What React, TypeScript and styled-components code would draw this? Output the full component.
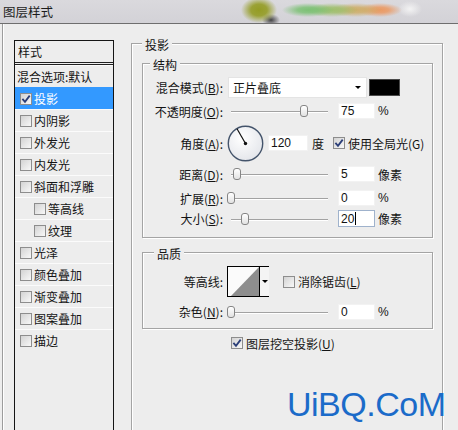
import React from "react";
import styled, { createGlobalStyle } from "styled-components";

const GlobalStyle = createGlobalStyle`
  html, body { margin: 0; padding: 0; background: #ededed; }
  body {
    font-family: "Noto Sans CJK SC", "Noto Sans", sans-serif;
    font-size: 12px;
    color: #141414;
  }
  * { box-sizing: border-box; }
`;

const Window = styled.div`
  position: relative;
  width: 458px;
  height: 430px;
  overflow: hidden;
  background: #ededed;
  display: flex;
  flex-direction: column;
`;

const TitleBar = styled.div`
  height: 24px;
  flex: none;
  border-bottom: 1px solid #6e6e6e;
  padding-left: 3px;
  font-size: 12.5px;
  line-height: 23px;
  color: #1c1c1c;
  background:
    radial-gradient(ellipse 18px 13px at 259px 10px, rgba(148, 156, 36, 1) 0, rgba(148, 156, 36, 0.9) 45%, rgba(148, 156, 36, 0) 100%),
    radial-gradient(ellipse 9px 6px at 271px 20px, rgba(30, 30, 30, 0.8), rgba(30, 30, 30, 0) 100%),
    radial-gradient(ellipse 26px 7px at 308px 10px, rgba(120, 192, 112, 0.95) 0, rgba(120, 192, 112, 0.8) 40%, rgba(120, 192, 112, 0) 100%),
    radial-gradient(ellipse 26px 7px at 332px 10px, rgba(156, 190, 104, 0.95) 0, rgba(156, 190, 104, 0.8) 40%, rgba(156, 190, 104, 0) 100%),
    radial-gradient(ellipse 26px 7px at 356px 10px, rgba(206, 172, 100, 0.95) 0, rgba(206, 172, 100, 0.8) 40%, rgba(206, 172, 100, 0) 100%),
    radial-gradient(ellipse 22px 7px at 380px 10px, rgba(236, 150, 92, 0.95) 0, rgba(236, 150, 92, 0.8) 40%, rgba(236, 150, 92, 0) 100%),
    radial-gradient(ellipse 12px 8px at 410px 9px, rgba(246, 246, 246, 0.9), rgba(246, 246, 246, 0) 100%),
    linear-gradient(#dad9dd, #d3d2d7);
`;

const Body = styled.div`
  flex: 1;
  min-height: 0;
  display: flex;
  padding-left: 2px;
`;

const Frame = styled.div`
  flex: 1;
  display: flex;
  align-items: flex-start;
  border-left: 1px solid #9c9c9c;
  box-shadow: inset 1px 0 0 #fff;
  padding: 10px 0 0 11px;
`;

/* ---------- left style list ---------- */

const StyleList = styled.div`
  width: 100px;
  height: 400px;
  margin-top: 6px;
  flex: none;
  border: 1px solid #151515;
  display: flex;
  flex-direction: column;
`;

const ListHeader = styled.div`
  height: 24px;
  flex: none;
  padding-left: 3px;
  line-height: 21px;
  border-bottom: 3px double #202020;
`;

const ListRow = styled.div<{ $selected?: boolean; $indent?: boolean; $plain?: boolean }>`
  height: 22px;
  flex: none;
  display: flex;
  align-items: center;
  gap: 2px;
  white-space: nowrap;
  padding-left: ${(p) => (p.$plain ? 2 : p.$indent ? 19 : 5)}px;
  border-top: 1px solid ${(p) => (p.$selected ? "#3399ff" : "#fbfbfb")};
  background: ${(p) => (p.$selected ? "#3399ff" : "transparent")};
  color: ${(p) => (p.$selected ? "#fff" : "#141414")};
`;

/* ---------- checkbox ---------- */

const Box = styled.span`
  width: 12px;
  height: 12px;
  flex: none;
  border: 1px solid #8d8d8d;
  background: linear-gradient(135deg, #d3d3d3, #f8f8f8);
  display: inline-flex;
  align-items: center;
  justify-content: center;
`;

const CheckBox: React.FC<{ checked?: boolean }> = ({ checked }) => (
  <Box>
    {checked && (
      <svg width="10" height="10" viewBox="0 0 10 10">
        <path d="M1.4 4.8 L4 7.8 L8.7 1.6" fill="none" stroke="#2b3e78" strokeWidth="1.8" />
      </svg>
    )}
  </Box>
);

const CheckLabel = styled.span<{ $ml?: number }>`
  display: inline-flex;
  align-items: center;
  gap: 3px;
  white-space: nowrap;
  margin-left: ${(p) => p.$ml ?? 0}px;
`;

const Key = styled.u`
  text-decoration-thickness: 1px;
  text-underline-offset: 1px;
`;

/* ---------- group boxes ---------- */

const Group = styled.fieldset<{ $w: number; $h?: number; $pad: string; $mt?: number }>`
  margin: ${(p) => p.$mt ?? 0}px 0 0 0;
  min-width: 0;
  width: ${(p) => p.$w}px;
  ${(p) => (p.$h ? `height: ${p.$h}px;` : "")}
  flex: none;
  border: 1px solid #a4a4a4;
  box-shadow: inset 1px 1px 0 #fff, 1px 1px 0 #fff;
  padding: ${(p) => p.$pad};
  display: flex;
  flex-direction: column;
`;

const Legend = styled.legend<{ $shift?: number }>`
  padding: 4px 3px 0;
  margin-left: ${(p) => p.$shift ?? 0}px;
  line-height: 14px;
  background: #ededed;
`;

const MainGroup = styled(Group)`
  margin-left: 17px;
`;

const FormRow = styled.div<{ $mt?: number; $h: number; $pl?: number }>`
  display: flex;
  align-items: center;
  height: ${(p) => p.$h}px;
  margin-top: ${(p) => p.$mt ?? 0}px;
  padding-left: ${(p) => p.$pl ?? 0}px;
  white-space: nowrap;
`;

const Label = styled.span`
  width: 73px;
  flex: none;
  text-align: right;
  white-space: nowrap;
`;

const Select = styled.div`
  width: 139px;
  height: 21px;
  margin-left: 5px;
  flex: none;
  background: #fff;
  border: 1px solid #e4e4e4;
  display: flex;
  align-items: center;
  justify-content: space-between;
  padding: 0 5px 0 4px;
`;

const DownArrow = styled.span<{ $size: number }>`
  width: 0;
  height: 0;
  border-left: ${(p) => p.$size}px solid transparent;
  border-right: ${(p) => p.$size}px solid transparent;
  border-top: ${(p) => p.$size}px solid #000;
`;

const Swatch = styled.div`
  width: 31px;
  height: 17px;
  margin-left: 2px;
  flex: none;
  background: #000;
  border: 1px solid #4a4a4a;
`;

const Track = styled.div`
  position: relative;
  width: 98px;
  height: 12px;
  margin-left: 7px;
  flex: none;
  &::before {
    content: "";
    position: absolute;
    left: 1px;
    right: 0;
    top: 6px;
    height: 1px;
    background: #a2a2a2;
    box-shadow: 0 1px 0 #fff;
  }
`;

const Thumb = styled.span`
  position: absolute;
  top: 0;
  width: 8px;
  height: 12px;
  border: 1px solid #858585;
  border-radius: 3px;
  background: linear-gradient(#ffffff, #e2e2e2);
`;

const Slider: React.FC<{ frac: number }> = ({ frac }) => (
  <Track>
    <Thumb style={{ left: `${Math.round(frac * 97 + 1 - 4)}px` }} />
  </Track>
);

const Field = styled.div<{ $w: number; $ml: number; $focus?: boolean }>`
  width: ${(p) => p.$w}px;
  height: ${(p) => (p.$focus ? 17 : 16)}px;
  margin-left: ${(p) => p.$ml}px;
  flex: none;
  background: #fff;
  border: 1px solid ${(p) => (p.$focus ? "#9fb2cc" : "#f2f2f2")};
  padding-left: 2px;
  display: flex;
  align-items: center;
  font-family: "Liberation Sans", Arial, sans-serif;
  font-size: 12px;
  color: #111;
`;

const Caret = styled.span`
  width: 1px;
  height: 13px;
  background: #000;
  margin-left: 1px;
`;

const Unit = styled.span<{ $ml?: number }>`
  margin-left: ${(p) => p.$ml ?? 3}px;
  flex: none;
`;

const PctUnit = styled(Unit)`
  font-family: "Liberation Sans", Arial, sans-serif;
  font-size: 12px;
`;

const DialWrap = styled.div`
  width: 37px;
  height: 37px;
  margin-left: 4px;
  flex: none;
  display: flex;
`;

const Dial: React.FC<{ angle: number }> = ({ angle }) => {
  const r = (angle * Math.PI) / 180;
  const x2 = 18.5 + Math.cos(r) * 17;
  const y2 = 18.5 - Math.sin(r) * 17;
  return (
    <DialWrap>
      <svg width="37" height="37" viewBox="0 0 37 37">
        <defs>
          <radialGradient id="dialFill" cx="40%" cy="35%" r="70%">
            <stop offset="0" stopColor="#ffffff" />
            <stop offset="1" stopColor="#e3e5ea" />
          </radialGradient>
        </defs>
        <circle cx="18.5" cy="18.5" r="17.2" fill="url(#dialFill)" stroke="#44546b" strokeWidth="1.4" />
        <line x1="18.5" y1="18.5" x2={x2} y2={y2} stroke="#111" strokeWidth="1.2" />
        <circle cx="18.5" cy="18.5" r="1.7" fill="#111" />
      </svg>
    </DialWrap>
  );
};

const ContourBox = styled.div`
  width: 42px;
  height: 31px;
  margin-left: 4px;
  flex: none;
  border: 1px solid #000;
  display: flex;
  background: #fff;
`;

const ContourPreview = styled.div`
  flex: 1;
  display: flex;
  background: #fbfbfb;
`;

const ContourMenu = styled.div`
  width: 10px;
  flex: none;
  border-left: 1px solid #000;
  background: #f4f4f4;
  display: flex;
  align-items: center;
  justify-content: center;
`;

const Watermark = styled.div`
  position: absolute;
  left: 287px;
  top: 387px;
  font-family: "Liberation Sans", Arial, sans-serif;
  font-size: 34px;
  line-height: 34px;
  letter-spacing: -0.5px;
  color: #1b6bc9;
  white-space: nowrap;
`;

const listItems: { text: string; indent?: boolean; selected?: boolean; checked?: boolean }[] = [
  { text: "投影", selected: true, checked: true },
  { text: "内阴影" },
  { text: "外发光" },
  { text: "内发光" },
  { text: "斜面和浮雕" },
  { text: "等高线", indent: true },
  { text: "纹理", indent: true },
  { text: "光泽" },
  { text: "颜色叠加" },
  { text: "渐变叠加" },
  { text: "图案叠加" },
  { text: "描边" },
];

export default function App() {
  return (
    <Window>
      <GlobalStyle />
      <TitleBar>图层样式</TitleBar>
      <Body>
        <Frame>
          <StyleList>
            <ListHeader>样式</ListHeader>
            <ListRow $plain>混合选项:默认</ListRow>
            {listItems.map((it) => (
              <ListRow key={it.text} $selected={it.selected} $indent={it.indent}>
                <CheckBox checked={it.checked} />
                <span>{it.text}</span>
              </ListRow>
            ))}
          </StyleList>

          <MainGroup $w={312} $h={420} $pad="2px 9px 0 10px">
            <Legend>投影</Legend>

            <Group $w={291} $pad="5px 0 10px 7px">
              <Legend>结构</Legend>
              <FormRow $h={21}>
                <Label>
                  混合模式(<Key>B</Key>):
                </Label>
                <Select>
                  <span>正片叠底</span>
                  <DownArrow $size={3.5} />
                </Select>
                <Swatch />
              </FormRow>
              <FormRow $h={16} $mt={5}>
                <Label>
                  不透明度(<Key>O</Key>):
                </Label>
                <Slider frac={0.75} />
                <Field $w={37} $ml={10}>75</Field>
                <PctUnit>%</PctUnit>
              </FormRow>
              <FormRow $h={36} $mt={6}>
                <Label>
                  角度(<Key>A</Key>):
                </Label>
                <Dial angle={120} />
                <Field $w={40} $ml={4}>120</Field>
                <Unit $ml={4}>度</Unit>
                <CheckLabel $ml={9}>
                  <CheckBox checked />
                  使用全局光(G)
                </CheckLabel>
              </FormRow>
              <FormRow $h={16} $mt={5}>
                <Label>
                  距离(<Key>D</Key>):
                </Label>
                <Slider frac={0.057} />
                <Field $w={37} $ml={10}>5</Field>
                <Unit>像素</Unit>
              </FormRow>
              <FormRow $h={16} $mt={8}>
                <Label>
                  扩展(<Key>R</Key>):
                </Label>
                <Slider frac={0} />
                <Field $w={37} $ml={10}>0</Field>
                <PctUnit>%</PctUnit>
              </FormRow>
              <FormRow $h={17} $mt={4}>
                <Label>
                  大小(<Key>S</Key>):
                </Label>
                <Slider frac={0.144} />
                <Field $w={37} $ml={10} $focus>
                  20
                  <Caret />
                </Field>
                <Unit>像素</Unit>
              </FormRow>
            </Group>

            <Group $w={291} $mt={5} $pad="5px 0 8px 7px">
              <Legend $shift={4}>品质</Legend>
              <FormRow $h={31}>
                <Label>等高线:</Label>
                <ContourBox>
                  <ContourPreview>
                    <svg width="31" height="29" viewBox="0 0 31 29">
                      <polygon points="3,29 31,0 31,29" fill="#8e8e8e" />
                    </svg>
                  </ContourPreview>
                  <ContourMenu>
                    <DownArrow $size={3} />
                  </ContourMenu>
                </ContourBox>
                <CheckLabel $ml={14}>
                  <CheckBox />
                  <span>
                    消除锯齿(<Key>L</Key>)
                  </span>
                </CheckLabel>
              </FormRow>
              <FormRow $h={17} $mt={6}>
                <Label>
                  杂色(<Key>N</Key>):
                </Label>
                <Slider frac={0} />
                <Field $w={37} $ml={10}>0</Field>
                <PctUnit>%</PctUnit>
              </FormRow>
            </Group>

            <FormRow $h={14} $mt={7} $pl={89}>
              <CheckLabel>
                <CheckBox checked />
                <span>
                  图层挖空投影(<Key>U</Key>)
                </span>
              </CheckLabel>
            </FormRow>
          </MainGroup>
        </Frame>
      </Body>
      <Watermark>UiBQ.CoM</Watermark>
    </Window>
  );
}
